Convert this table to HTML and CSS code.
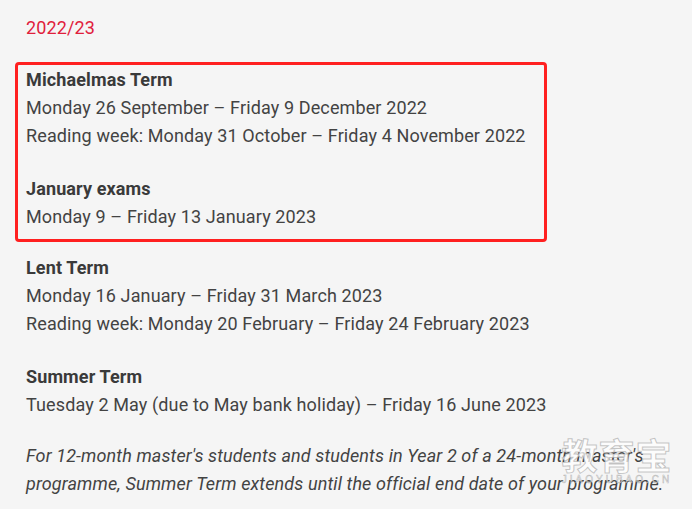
FILE: index.html
```html
<!DOCTYPE html>
<html lang="en">
<head>
<meta charset="utf-8">
<title>Term dates 2022/23</title>
<link rel="stylesheet" href="styles.css">
</head>
<body>
<main class="page">
  <h2 class="year">2022/23</h2>
  <div class="highlight">
    <p class="term"><strong>Michaelmas Term</strong><br>Monday 26 September – Friday 9 December 2022<br>Reading week: Monday 31 October – Friday 4 November 2022</p>
    <p class="term last"><strong>January exams</strong><br>Monday 9 – Friday 13 January 2023</p>
  </div>
  <p class="term"><strong>Lent Term</strong><br>Monday 16 January – Friday 31 March 2023<br>Reading week: Monday 20 February – Friday 24 February 2023</p>
  <p class="term"><strong>Summer Term</strong><br>Tuesday 2 May (due to May bank holiday) – Friday 16 June 2023</p>
  <p class="term note">For 12-month master's students and students in Year 2 of a 24-month master's programme, Summer Term extends until the official end date of your programme.</p>
  <div class="watermark"><span class="wm-cn">教育宝</span><span class="wm-en">JIAOYUBAO.CN</span></div>
</main>
</body>
</html>
```
FILE: styles.css
```css
html, body {
  margin: 0;
  padding: 0;
  background: #f5f5f5;
}
body {
  font-family: Roboto, "Liberation Sans", sans-serif;
  font-size: 18px;
  line-height: 28px;
  letter-spacing: 0.12px;
  color: #434343;
  overflow: hidden;
}
.page {
  position: relative;
  padding: 14px 0 0 26px;
  height: 495px;
}
.year {
  margin: 0 0 20px;
  font-size: 18px;
  font-weight: 400;
  line-height: 28px;
  color: #e0203c;
}
.highlight {
  margin: 0 0 12px -11px;
  width: 518px;
  padding: 1px 0 8px 8px;
  border: 3px solid #ff2020;
  border-radius: 4px;
}
.term {
  margin: 0 0 25px;
}
.term strong {
  font-weight: 700;
  color: #3a3a3a;
}
.term.last {
  margin-bottom: 0;
}
.note {
  margin-top: -2px;
  font-style: italic;
  width: 650px;
}
.watermark {
  position: absolute;
  left: 561px;
  top: 434px;
  width: 112px;
  display: flex;
  flex-direction: column;
  align-items: center;
  pointer-events: none;
}
.wm-cn {
  font-family: "Noto Sans CJK SC", sans-serif;
  font-size: 36px;
  line-height: 40px;
  font-weight: 700;
  letter-spacing: 1px;
  color: rgba(255,255,255,0.75);
  -webkit-text-stroke: 1px rgba(150,150,150,0.55);
}
.wm-en {
  font-family: "Liberation Sans", sans-serif;
  font-size: 10px;
  line-height: 12px;
  letter-spacing: 3px;
  color: rgba(255,255,255,0.75);
  -webkit-text-stroke: 0.5px rgba(140,140,140,0.65);
}
```
